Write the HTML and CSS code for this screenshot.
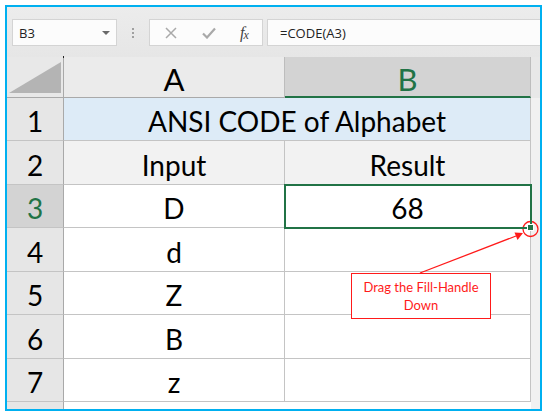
FILE: index.html
```html
<!DOCTYPE html>
<html>
<head>
<meta charset="utf-8">
<link rel="stylesheet" href="styles.css">
</head>
<body>
<div class="frame">
  <div class="toolbar">
    <div class="namebox"><span class="nb-text">B3</span><span class="caret"></span></div>
    <div class="sep"><i></i><i></i><i></i></div>
    <div class="fnbtns">
      <svg class="ic" width="12" height="12" viewBox="0 0 12 12"><path d="M1 1 L11 11 M11 1 L1 11" stroke="#a9a9a9" stroke-width="1.5" fill="none"/></svg>
      <svg class="ic" width="14" height="12" viewBox="0 0 14 12"><path d="M1 6.5 L5 10.5 L13 1.5" stroke="#a9a9a9" stroke-width="2.2" fill="none"/></svg>
      <span class="fx"><i>f</i><i class="fx-x">x</i></span>
    </div>
    <div class="formula">=CODE(A3)</div>
  </div>
  <div class="sheet">
    <div class="corner"><span class="dot"></span><span class="tri"></span></div>
    <div class="colhead">A</div>
    <div class="colhead sel">B</div>
    <div class="strip head"></div>

    <div class="rowhead">1</div>
    <div class="cell merged title">ANSI CODE of Alphabet</div>
    <div class="strip"></div>

    <div class="rowhead">2</div>
    <div class="cell sub">Input</div>
    <div class="cell sub">Result</div>
    <div class="strip"></div>

    <div class="rowhead sel">3</div>
    <div class="cell">D</div>
    <div class="cell active">68<span class="handle"></span></div>
    <div class="strip"></div>

    <div class="rowhead">4</div>
    <div class="cell">d</div>
    <div class="cell"></div>
    <div class="strip"></div>

    <div class="rowhead">5</div>
    <div class="cell">Z</div>
    <div class="cell"></div>
    <div class="strip"></div>

    <div class="rowhead">6</div>
    <div class="cell">B</div>
    <div class="cell"></div>
    <div class="strip"></div>

    <div class="rowhead">7</div>
    <div class="cell">z</div>
    <div class="cell"></div>
    <div class="strip"></div>

    <div class="rowhead tail"></div>
    <div class="cell tail"></div>
    <div class="cell tail"></div>
    <div class="strip tail"></div>
  </div>
</div>
<svg class="annot" width="548" height="418" viewBox="0 0 548 418">
  <circle cx="530.5" cy="229" r="7.5" fill="none" stroke="#ff1a1a" stroke-width="1.3"/>
  <line x1="420" y1="273" x2="516" y2="236" stroke="#ff1a1a" stroke-width="1.3"/>
  <polygon points="523,233 514.5,232.5 517.5,240" fill="#ff1a1a"/>
</svg>
<div class="callout">Drag the Fill-Handle<br>Down</div>
</body>
</html>
```

FILE: styles.css
```css
html, body {
  margin: 0;
  padding: 0;
}
body {
  width: 548px;
  height: 418px;
  background: #ffffff;
  position: relative;
  font-family: Lato, "Open Sans", sans-serif;
  overflow: hidden;
}
.frame {
  margin: 5px;
  width: 537px;
  height: 406px;
  box-sizing: border-box;
  border: 2px solid #00b0f0;
  background: #e8e8e8;
  display: flex;
  flex-direction: column;
}
.toolbar {
  height: 50px;
  box-sizing: border-box;
  padding: 12px 0 0 5px;
  display: flex;
  align-items: flex-start;
  background: linear-gradient(#ececec, #e6e6e6);
}
.namebox {
  width: 105px;
  height: 27px;
  box-sizing: border-box;
  background: #fcfcfc;
  border: 1px solid #d4d4d4;
  display: flex;
  align-items: center;
  justify-content: space-between;
  padding: 0 6px 0 6px;
  font-family: "Open Sans", sans-serif;
  font-size: 13px;
  color: #222;
}
.caret {
  width: 0;
  height: 0;
  border-left: 4px solid transparent;
  border-right: 4px solid transparent;
  border-top: 4px solid #6a6a6a;
}
.sep {
  width: 32px;
  height: 27px;
  display: flex;
  flex-direction: column;
  align-items: center;
  justify-content: center;
  gap: 2px;
}
.sep i {
  width: 2px;
  height: 2px;
  background: #a0a0a0;
}
.fnbtns {
  width: 114px;
  height: 27px;
  box-sizing: border-box;
  background: #fcfcfc;
  border: 1px solid #d4d4d4;
  display: flex;
  align-items: center;
  padding: 0 0 0 15px;
  gap: 0;
}
.fnbtns .ic:first-child {
  margin-right: 25px;
}
.fnbtns .ic:nth-child(2) {
  margin-right: 24px;
}
.fx {
  font-family: "Liberation Serif", serif;
  font-size: 16px;
  color: #444;
  font-style: italic;
  letter-spacing: -1px;
}
.fx i { font-style: italic; }
.fx-x {
  font-size: 12px;
  position: relative;
  top: 1px;
}
.formula {
  flex: 1;
  margin-left: 4px;
  height: 27px;
  box-sizing: border-box;
  background: #fcfcfc;
  border: 1px solid #d4d4d4;
  border-right: none;
  display: flex;
  align-items: center;
  padding-left: 12px;
  font-family: "Open Sans", sans-serif;
  font-size: 13px;
  color: #222;
}
.sheet {
  flex: 1;
  display: grid;
  grid-template-columns: 57px 221px 246px 9px;
  grid-template-rows: 41px 43px 44px 43px 44px 43px 44px 43px 7px;
  background: #ffffff;
}
.corner {
  background: #e8e8e8;
  border-right: 1px solid #a9a9a9;
  border-bottom: 1px solid #a9a9a9;
  box-sizing: border-box;
  position: relative;
  display: flex;
  align-items: flex-end;
  justify-content: flex-end;
  padding: 0 2px 4px 0;
}
.corner .tri {
  width: 52px;
  height: 31px;
  background: #b4b4b4;
  clip-path: polygon(100% 0, 100% 100%, 0 100%);
}
.corner .dot {
  position: absolute;
  right: -1px;
  top: -1px;
  width: 1px;
  height: 2px;
  background: #222;
}
.colhead {
  background: #ebebeb;
  border-right: 1px solid #bdbdbd;
  border-bottom: 1px solid #a9a9a9;
  box-sizing: border-box;
  display: flex;
  align-items: flex-end;
  justify-content: center;
  padding-bottom: 1px;
  font-size: 31px;
  line-height: 34px;
  color: #000;
}
.colhead.sel {
  background: #d3d3d3;
  color: #217346;
  border-bottom: 2px solid #217346;
  padding-bottom: 0;
}
.strip {
  background: #f1f1f1;
}
.strip.head {
  background: #e8e8e8;
}
.rowhead {
  background: #e6e6e6;
  border-right: 1px solid #a9a9a9;
  border-bottom: 1px solid #c4c4c4;
  box-sizing: border-box;
  display: flex;
  align-items: center;
  justify-content: center;
  padding-top: 4px;
  font-size: 28px;
  color: #000;
}
.rowhead.sel {
  background: #d3d3d3;
  color: #217346;
}
.cell {
  border-right: 1px solid #c4c4c4;
  border-bottom: 1px solid #c4c4c4;
  box-sizing: border-box;
  display: flex;
  align-items: center;
  justify-content: center;
  padding-top: 4px;
  font-size: 28px;
  color: #000;
  position: relative;
}
.cell.merged {
  grid-column: span 2;
}
.cell.title {
  background: #ddebf7;
}
.cell.sub {
  background: #f2f2f2;
}
.cell.active {
  outline: 2px solid #217346;
  outline-offset: -1px;
  z-index: 1;
}
.handle {
  position: absolute;
  right: -4px;
  bottom: -4px;
  width: 5px;
  height: 5px;
  background: #217346;
  border: 1px solid #ffffff;
}
.rowhead.tail {
  border-bottom: none;
  padding: 0;
}
.cell.tail {
  border: none;
  padding: 0;
}
.annot {
  position: absolute;
  left: 0;
  top: 0;
  pointer-events: none;
}
.callout {
  position: absolute;
  left: 351px;
  top: 273px;
  width: 140px;
  height: 46px;
  box-sizing: border-box;
  border: 1px solid #ff1a1a;
  background: #ffffff;
  color: #ff1a1a;
  font-family: Lato, sans-serif;
  font-size: 13px;
  line-height: 18px;
  text-align: center;
  padding-top: 4px;
}
```
